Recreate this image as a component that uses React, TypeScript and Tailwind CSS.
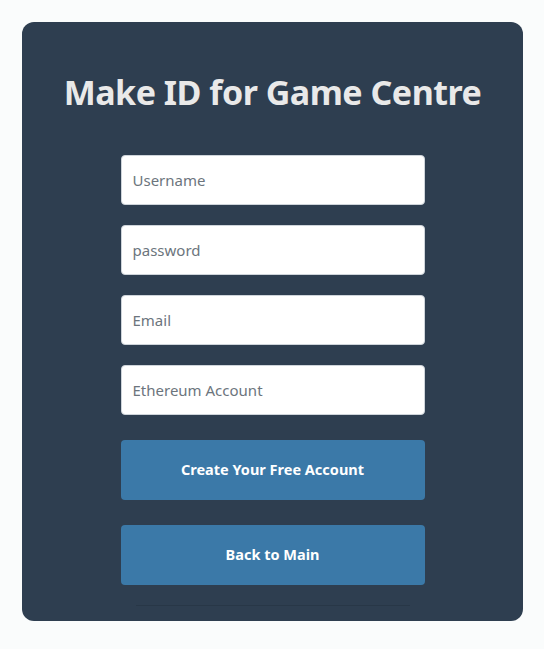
import React from 'react';

const FIELDS = ['Username', 'password', 'Email', 'Ethereum Account'];

function App() {
  return (
    <div className="min-h-screen bg-[#fafcfc] pt-[22px] px-[22px] font-['Noto_Sans',sans-serif]">
      <div className="w-[501px] h-[599px] bg-[#2e3e50] rounded-[12px] flex flex-col items-center pt-[44px]">
        <h1 className="text-[34px] leading-[52px] font-bold text-[#e9e9e9] tracking-[-0.5px]">Make ID for Game Centre</h1>
        <form className="w-[304px] flex flex-col mt-[37px]" onSubmit={(e) => e.preventDefault()}>
          {FIELDS.map((f) => (
            <input
              key={f}
              type={f === 'password' ? 'password' : 'text'}
              placeholder={f}
              className="h-[50px] mb-[20px] bg-white border border-[#ced4da] rounded-[4px] px-[11px] text-[15px] text-[#495057] placeholder:text-[#6c757d] outline-none"
            />
          ))}
          <button className="h-[60px] mt-[5px] bg-[#3b79a8] rounded-[4px] text-white font-bold text-[14.5px]">
            Create Your Free Account
          </button>
          <button
            type="button"
            className="h-[60px] mt-[25px] bg-[#3b79a8] rounded-[4px] text-white font-bold text-[14.5px]"
          >
            Back to Main
          </button>
        </form>
        <div className="w-[274px] h-px bg-[#283747] mt-[20px]"></div>
      </div>
    </div>
  );
}

export default App;
